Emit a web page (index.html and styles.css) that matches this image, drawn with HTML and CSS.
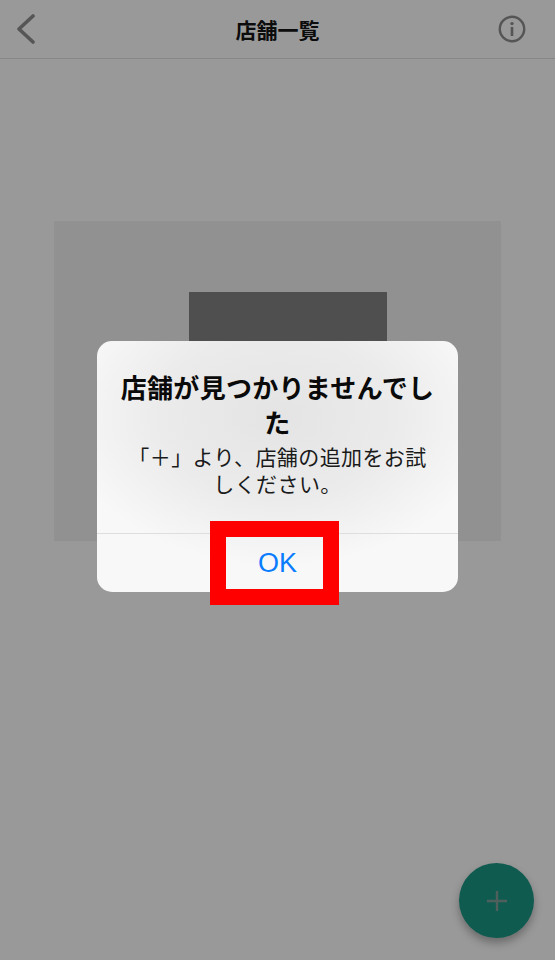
FILE: index.html
```html
<!DOCTYPE html>
<html lang="ja">
<head>
<meta charset="utf-8">
<title>店舗一覧</title>
<link rel="stylesheet" href="styles.css">
</head>
<body>
<div class="screen">
  <header class="topbar">
    <svg class="back" width="20" height="30" viewBox="0 0 20 30"><path d="M17 2 3 15 17 28" fill="none" stroke="#565656" stroke-width="3.6" stroke-linecap="round" stroke-linejoin="round"/></svg>
    <h1 class="title">店舗一覧</h1>
    <svg class="info" width="28" height="28" viewBox="0 0 28 28"><circle cx="14" cy="14" r="12.2" fill="none" stroke="#555" stroke-width="2.4"/><circle cx="14" cy="8.6" r="1.7" fill="#555"/><rect x="12.7" y="12" width="2.6" height="9" fill="#555"/></svg>
  </header>
  <main class="content">
    <div class="panel"><div class="placeholder"></div></div>
  </main>
  <div class="fab"><svg width="20" height="20" viewBox="0 0 20 20"><path d="M10 0V20M0 10H20" stroke="#4f5f5b" stroke-width="2.4"/></svg></div>
  <div class="dialog">
    <div class="dialog-body">
      <h2 class="dialog-title">店舗が見つかりませんでし<br>た</h2>
      <p class="dialog-text">「＋」より、店舗の追加をお試<br>しください。</p>
    </div>
    <div class="dialog-action">OK</div>
    <div class="highlight"></div>
  </div>
</div>
</body>
</html>
```
FILE: styles.css
```css
* { box-sizing: border-box; }
html, body { margin: 0; padding: 0; }
body { font-family: "Noto Sans CJK JP", "Liberation Sans", sans-serif; background: #999; }
.screen { position: relative; width: 555px; height: 960px; background: #999; overflow: hidden; }
.topbar { height: 59px; border-bottom: 1px solid #878787; display: grid; grid-template-columns: 1fr auto 1fr; align-items: center; padding: 0 29px 0 16px; }
.back { display: block; }
.title { margin: 0 0 0 13px; font-size: 21px; font-weight: 700; color: #0c0c0c; line-height: 1; }
.info { display: block; justify-self: end; }
.content { padding: 162px 54px 0; }
.panel { width: 447px; height: 320px; background: #919191; padding: 71px 114px 0 135px; }
.placeholder { width: 198px; height: 249px; background: #4f4f4f; }
.fab { position: absolute; left: 459px; top: 863px; width: 75px; height: 75px; border-radius: 50%; background: #0f5b50; box-shadow: 0 5px 9px rgba(0,0,0,.3); display: flex; align-items: center; justify-content: center; }
.fab svg { display: block; }
.dialog { position: absolute; left: 97px; top: 341px; width: 361px; height: 251px; border-radius: 15px; background: radial-gradient(ellipse 215px 150px at 50% 30%, #e4e4e4 0%, #ebebeb 55%, #f8f8f8 100%); }
.dialog-body { height: 192px; padding-top: 28px; text-align: center; }
.dialog-title { margin: 0; font-size: 26px; line-height: 35px; font-weight: 700; letter-spacing: .3px; color: #0a0a0a; white-space: nowrap; }
.dialog-text { margin: 4px 0 0; font-size: 21px; line-height: 27px; letter-spacing: .4px; color: #1a1a1a; white-space: nowrap; }
.dialog-action { height: 59px; border-top: 1px solid #dedede; display: flex; align-items: center; justify-content: center; font-family: "Liberation Sans", sans-serif; font-size: 27px; color: #0a7cff; }
.highlight { position: absolute; left: 113px; top: 180px; width: 129px; height: 84px; border: 16px solid #ff0000; }
```
